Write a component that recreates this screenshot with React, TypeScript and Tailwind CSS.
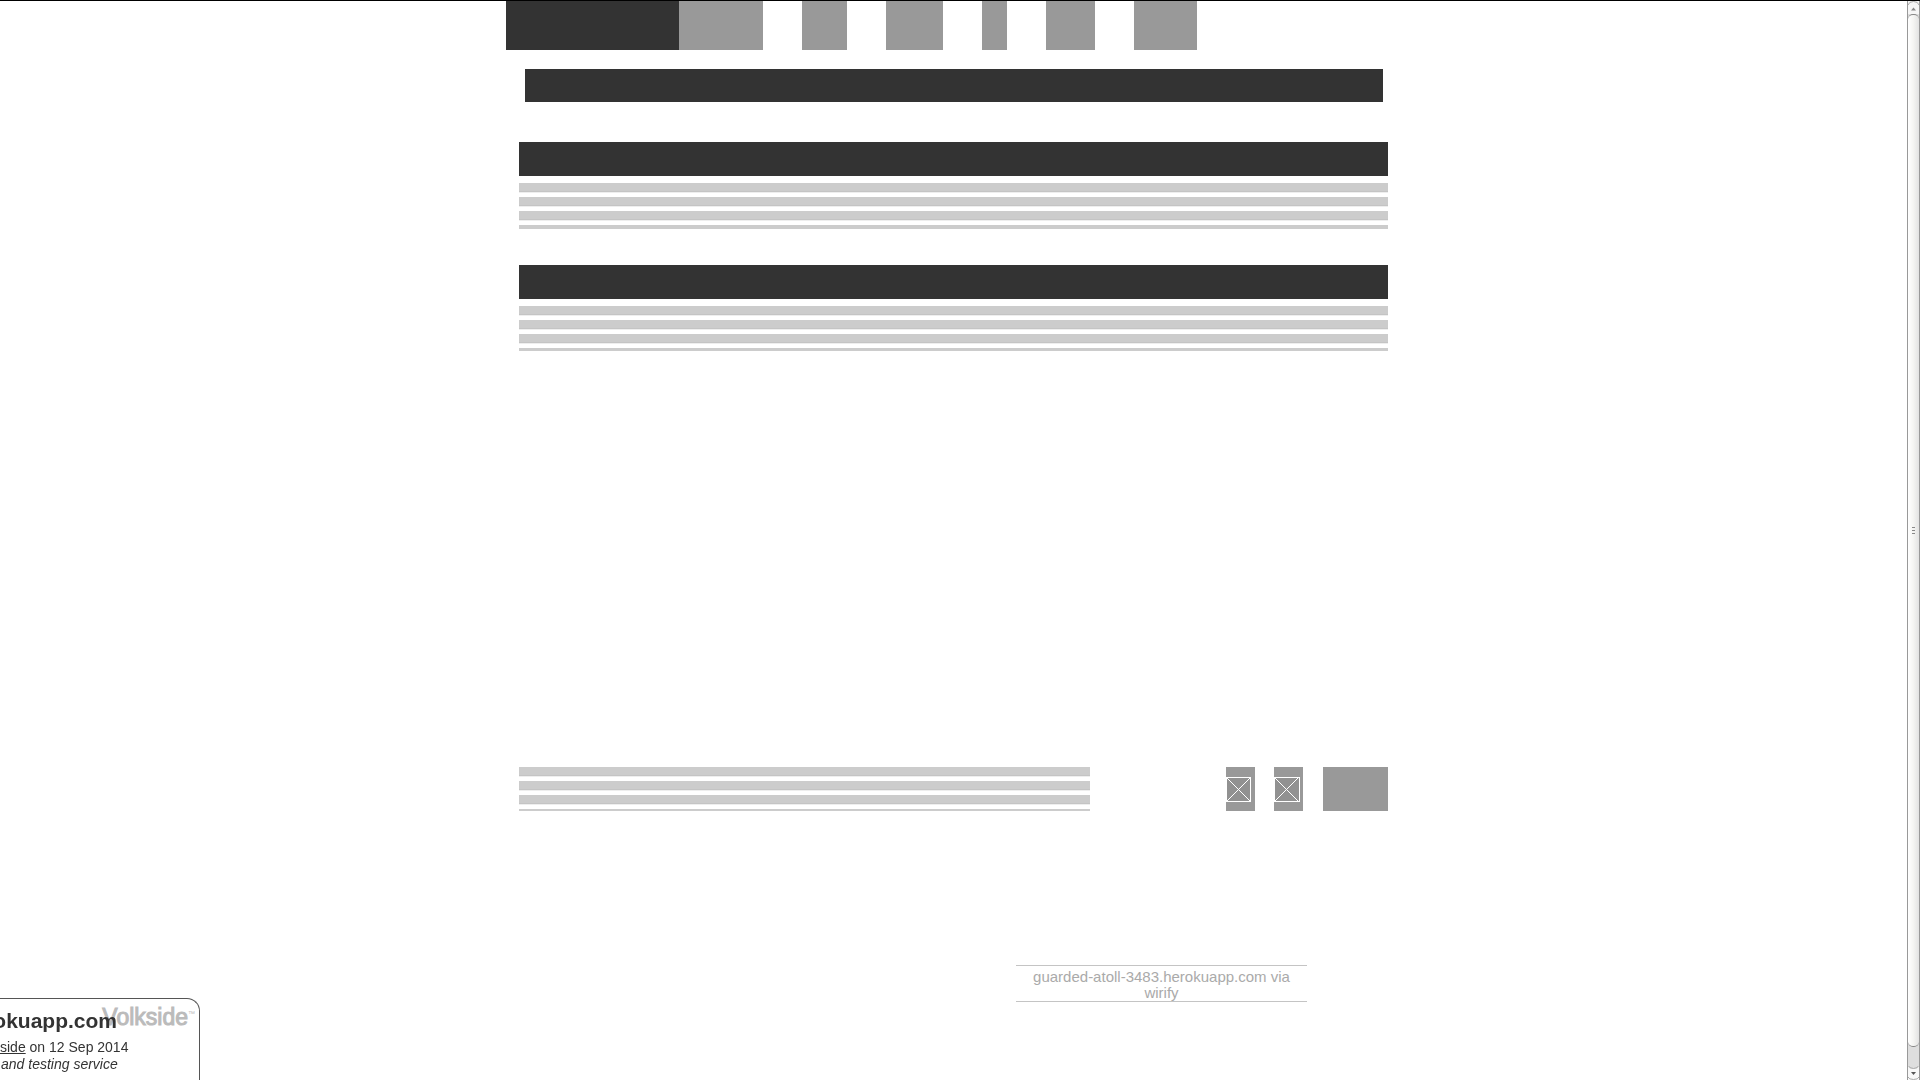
import React from "react";

const navItems = [
  { id: "home", width: "w-[84px]" },
  { id: "about", width: "w-[45px]" },
  { id: "projects", width: "w-[57px]" },
  { id: "faq", width: "w-[25px]" },
  { id: "team", width: "w-[49px]" },
  { id: "contact", width: "w-[63px]" },
];

function TextLines({ className }: { className: string }) {
  return (
    <div
      className={`bg-[repeating-linear-gradient(to_bottom,#cccccc_0px,#cccccc_8px,#c4c4c4_8px,#c4c4c4_9px,#eeeeee_9px,#eeeeee_10px,#ffffff_10px,#ffffff_14px)] ${className}`}
    />
  );
}

function Section({ className, lines }: { className: string; lines: string }) {
  return (
    <section className={className}>
      <div className="h-[34px] bg-[#333333]" />
      <TextLines className={`mt-[7px] ${lines}`} />
    </section>
  );
}

function ImageLink({ label, width }: { label: string; width: number }) {
  return (
    <a href="#" aria-label={label} className="flex h-11 w-[29px] items-center bg-[#999999]">
      <svg width={width} height="25" viewBox={`0 0 ${width} 25`} shapeRendering="crispEdges">
        <rect width={width} height="25" fill="#919191" />
        <path d="M1 1 24 24M24 1 1 24" stroke="#fff" fill="none" />
        <path d={`M0 .5H${width - 0.5}V24.5H0M.5 1V24`} stroke="#fff" fill="none" />
      </svg>
    </a>
  );
}

function Scrollbar() {
  return (
    <div className="flex w-[13px] shrink-0 flex-col border-x border-[#999999] bg-[#dedede]">
      <svg viewBox="0 0 11 13" className="h-[13px] w-full bg-[#f6f6f6]">
        <path d="M0 4Q1 .5 5.500 .5T11 4" fill="none" stroke="#aaa" />
        <path d="M3 9.500 5.500 6.500 8 9.500Z" fill="#888" />
      </svg>
      <div className="flex flex-1 flex-col items-center justify-center gap-0.5 rounded-[5px] border-y border-[#888888] bg-linear-to-r from-white via-[#f4f4f2] to-[#e2e2e2]">
        <span className="h-px w-[3px] bg-[#888888]" />
        <span className="h-px w-[3px] bg-[#888888]" />
        <span className="h-px w-[3px] bg-[#888888]" />
      </div>
      <div className="h-[19px]" />
      <svg viewBox="0 0 11 14" className="h-3.5 w-full">
        <path d="M0 0Q1 3 5.500 3T11 0V14H0Z" fill="#f8f8f8" />
        <path d="M0 -1Q1 2.500 5.500 2.500T11 -1M0 11Q1 13.500 5.500 13.500T11 11" fill="none" stroke="#aaa" />
        <path d="M3 6 5.500 9 8 6Z" fill="#555" />
      </svg>
    </div>
  );
}

function CreditCard() {
  return (
    <aside className="fixed bottom-0 left-0 h-[82px] w-[200px] overflow-hidden rounded-tr-[13px] border-t border-r border-[#555555] bg-white text-sm leading-[17px] text-[#333333]">
      <div className="absolute top-1.5 right-1 flex items-start text-[#bbbbbb]">
        <span className="text-[23px] leading-[25px] [-webkit-text-stroke:1px_#bbbbbb]">Volkside</span>
        <span className="pt-1 text-[7px] leading-[10px]">™</span>
      </div>
      <div className="relative flex w-[117px] justify-end pt-[9px]">
        <strong className="text-[21px] leading-[26px]">okuapp.com</strong>
      </div>
      <p className="relative pt-[5px]">
        <a href="#" className="underline">side</a> on 12 Sep 2014
      </p>
      <p className="relative pl-px italic">and testing service</p>
    </aside>
  );
}

export default function App() {
  return (
    <div className="flex min-h-screen border-t border-black bg-white font-['Liberation_Sans',sans-serif]">
      <div className="min-w-0 flex-1">
        <div className="mx-auto max-w-[895px]">
          <nav className="flex h-[49px]">
            <a href="#" aria-label="Brand" className="w-[173px] bg-[#333333]" />
            <div className="flex gap-[39px]">
              {navItems.map((item) => (
                <a key={item.id} href={`#${item.id}`} aria-label={item.id} className={`bg-[#999999] ${item.width}`} />
              ))}
            </div>
          </nav>
          <main className="px-[13px]">
            <div className="mt-[19px] mr-[5px] ml-1.5 h-[33px] bg-[#333333]" />
            <Section className="mt-10" lines="h-[46px]" />
            <Section className="mt-9" lines="h-[45px]" />
          </main>
          <footer className="mt-[416px] px-[13px]">
            <div className="flex justify-between">
              <TextLines className="h-11 w-[571px]" />
              <div className="flex">
                <ImageLink label="First link" width={25} />
                <div className="w-[19px]" />
                <ImageLink label="Second link" width={26} />
                <a href="#" aria-label="Third link" className="ml-5 h-11 w-[65px] bg-[#999999]" />
              </div>
            </div>
            <p className="mt-[154px] mr-[81px] ml-auto w-[291px] border-y border-[#c4c4c4] pt-[3px] text-center text-[15px] leading-4 text-[#aaaaaa]">
              guarded-atoll-3483.herokuapp.com via wirify
            </p>
          </footer>
        </div>
      </div>
      <Scrollbar />
      <CreditCard />
    </div>
  );
}
